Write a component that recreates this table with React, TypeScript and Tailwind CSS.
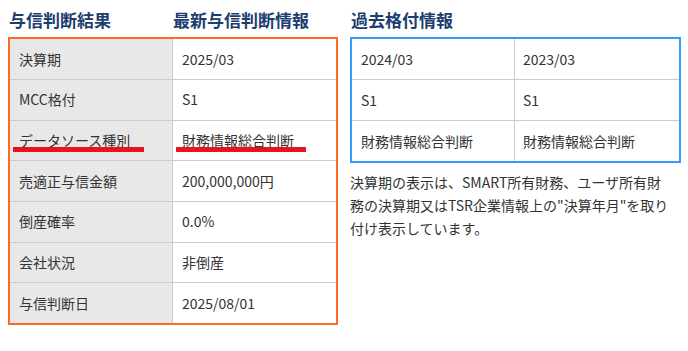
import React from "react";

const font = { fontFamily: '"Noto Sans CJK JP", "Noto Sans", sans-serif' };

const rows: { label: string; value: string; mark?: boolean }[] = [
  { label: "決算期", value: "2025/03" },
  { label: "MCC格付", value: "S1" },
  { label: "データソース種別", value: "財務情報総合判断", mark: true },
  { label: "売適正与信金額", value: "200,000,000円" },
  { label: "倒産確率", value: "0.0%" },
  { label: "会社状況", value: "非倒産" },
  { label: "与信判断日", value: "2025/08/01" },
];

const past = [
  ["2024/03", "2023/03"],
  ["S1", "S1"],
  ["財務情報総合判断", "財務情報総合判断"],
];

export default function App() {
  return (
    <div className="w-[688px] h-[351px] bg-white text-[#333] text-[14px]" style={font}>
      <div className="flex gap-[12px] pl-[8px] pt-[7px]">
        {/* left */}
        <div className="w-[330px]">
          <div className="flex h-[30px] items-start pt-[1px] leading-[24px] text-[17px] font-bold text-[#1c3d70]">
            <div className="w-[165px] pl-[1px]">与信判断結果</div>
            <div>最新与信判断情報</div>
          </div>
          <div className="border-2 border-[#ff6a21]">
            {rows.map((r, i) => (
              <div
                key={r.label}
                className={`grid grid-cols-[163px_1fr] ${i > 0 ? "border-t border-[#cccccc] h-[40.7px]" : "h-[40px]"}`}
              >
                <div className="relative flex items-center bg-[#e8e8e8] pl-[9px] border-r border-[#cccccc]">
                  {r.label}
                  {r.mark && (
                    <span className="absolute left-[3px] top-[26px] w-[131px] h-[5px] bg-[#e5161b]" />
                  )}
                </div>
                <div className="relative flex items-center pl-[9px]">
                  {r.value}
                  {r.mark && (
                    <span className="absolute left-[3px] top-[26px] w-[130px] h-[5px] bg-[#e5161b]" />
                  )}
                </div>
              </div>
            ))}
          </div>
        </div>
        {/* right */}
        <div className="w-[331px]">
          <div className="flex h-[30px] items-start pt-[1px] leading-[24px] text-[17px] font-bold text-[#1c3d70]">
            <div className="pl-[1px]">過去格付情報</div>
          </div>
          <div className="border-2 border-[#339dff]">
            {past.map((r, i) => (
              <div
                key={i}
                className={`grid grid-cols-[163px_1fr] ${i > 0 ? "border-t border-[#cccccc] h-[41px]" : "h-[40px]"}`}
              >
                <div className="flex items-center pl-[9px] border-r border-[#cccccc]">{r[0]}</div>
                <div className="flex items-center pl-[8px]">{r[1]}</div>
              </div>
            ))}
          </div>
          <p className="mt-[8px] leading-[23px] text-[14px] text-[#333]">
            決算期の表示は、SMART所有財務、ユーザ所有財
            <br />
            務の決算期又はTSR企業情報上の"決算年月"を取り
            <br />
            付け表示しています。
          </p>
        </div>
      </div>
    </div>
  );
}
